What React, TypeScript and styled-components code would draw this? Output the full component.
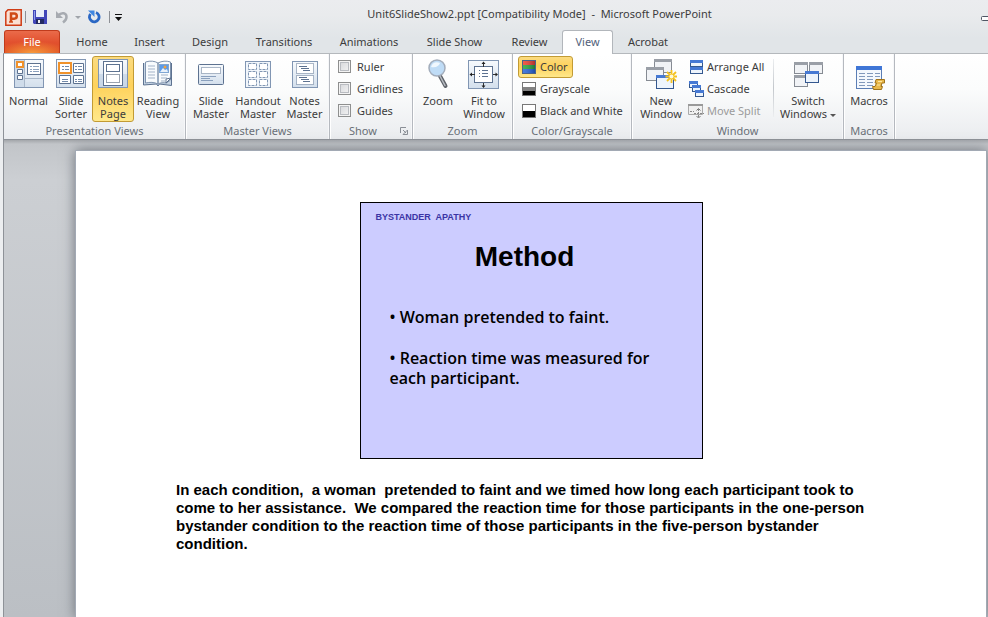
import React from "react";
import styled, { createGlobalStyle, css } from "styled-components";

const GlobalStyle = createGlobalStyle`
  *, *::before, *::after { box-sizing: border-box; }
  html, body { margin: 0; }
  body {
    background: #eceef0;
    font-family: "Noto Sans", "Open Sans", sans-serif;
    font-size: 11px;
    color: #3c3c3c;
  }
  button, input { font: inherit; color: inherit; }
`;

const Window = styled.div`
  display: flex;
  flex-direction: column;
  min-height: 100vh;
  overflow: hidden;
`;

const Header = styled.header`
  background: linear-gradient(#ebecef, #e9ebed 15px, #e1e5e8 38px);
`;

const TitleBar = styled.div`
  display: flex;
  align-items: center;
  height: 30px;
  padding-left: 5px;
`;

const QuickAccess = styled.div`
  display: flex;
  align-items: center;
  flex: none;
  width: 116px;
  padding-top: 4px;
`;

const ToolButton = styled.button<{ $width: number }>`
  display: flex;
  align-items: center;
  justify-content: center;
  flex: none;
  width: ${(p) => p.$width}px;
  height: 18px;
  padding: 0;
  border: 0;
  background: none;
`;

const ToolDivider = styled.span`
  flex: none;
  width: 1px;
  height: 12px;
  margin: 0 4px 0 3px;
  background: #8d9096;
`;

const Title = styled.h1`
  flex: 1;
  margin: 0 0 2px;
  font-size: 11px;
  line-height: 28px;
  font-weight: 400;
  text-align: center;
  white-space: pre;
`;

const WindowButtons = styled.div`
  display: flex;
  flex: none;
  justify-content: flex-end;
  width: 30px;
  padding-top: 6px;
`;

const TabBar = styled.nav`
  display: flex;
  height: 23px;
  padding-left: 4px;
`;

const tabBase = css`
  flex: none;
  height: 24px;
  padding: 0 0 2px;
  line-height: 20px;
  text-align: center;
  white-space: nowrap;
`;

const FileTab = styled.button`
  ${tabBase}
  width: 56px;
  margin-right: 3px;
  height: 23px;
  padding: 0;
  border: 1px solid #c03b1c;
  border-bottom: 0;
  border-radius: 3px 3px 0 0;
  color: #fff;
  background: radial-gradient(ellipse 36px 12px at 50% 100%, #f79a3c, rgba(247, 154, 60, 0)),
    linear-gradient(#ea6b4a, #e2512f 50%, #dd4a22);
`;

const Tab = styled.button<{ $width: number; $active?: boolean }>`
  ${tabBase}
  position: relative;
  width: ${(p) => p.$width}px;
  border: 1px solid ${(p) => (p.$active ? "#b2b6bb" : "transparent")};
  border-bottom: 0;
  border-radius: 3px 3px 0 0;
  background: ${(p) => (p.$active ? "#fff" : "transparent")};
  color: ${(p) => (p.$active ? "#52617a" : "#3c3c3c")};
`;

const Ribbon = styled.div`
  display: flex;
  height: 87px;
  margin-left: 3px;
  border: 1px solid #8e9298;
  border-top-color: #b4b8bc;
  border-right: 0;
  background: linear-gradient(#fff, #fbfcfc 35px, #eaecef);
`;

const Group = styled.section<{ $width: number }>`
  display: flex;
  flex-direction: column;
  flex: none;
  width: ${(p) => p.$width}px;
  border-right: 1px solid #b5b9bf;
  box-shadow: inset -1px 0 #f6f7f9, 1px 0 #fff;
`;

const GroupBody = styled.div<{ $pad?: number }>`
  display: flex;
  flex: none;
  height: 68px;
  padding: 2px 0 0 ${(p) => p.$pad ?? 3}px;
`;

const GroupFooter = styled.footer`
  display: flex;
  align-items: center;
  height: 17px;
  color: #6a7078;
`;

const GroupTitle = styled.h2`
  flex: 1;
  margin: 0;
  font-size: 11px;
  line-height: 16px;
  font-weight: 400;
  text-align: center;
`;

const Launcher = styled.button`
  display: flex;
  flex: none;
  width: 16px;
  height: 12px;
  padding: 2px 0 0 4px;
  border: 0;
  background: none;
`;

const chosen = css`
  border-color: #c29b34;
  background: linear-gradient(#fbdb80, #fed25c 45%, #ffe88a);
`;

const BigButton = styled.button<{ $width: number; $active?: boolean }>`
  display: flex;
  flex-direction: column;
  align-items: center;
  flex: none;
  width: ${(p) => p.$width}px;
  height: 66px;
  padding: 1px 0 0;
  border: 1px solid transparent;
  border-radius: 3px;
  background: none;
  line-height: 13px;
  text-align: center;
  white-space: nowrap;
  ${(p) => p.$active && chosen}

  svg { flex: none; margin-bottom: 4px; }
`;

const Column = styled.div<{ $width?: number }>`
  display: flex;
  flex-direction: column;
  align-items: flex-start;
  flex: none;
  width: ${(p) => (p.$width ? `${p.$width}px` : "auto")};
`;

const SmallButton = styled.button<{ $active?: boolean }>`
  display: flex;
  align-items: center;
  gap: 3px;
  height: 22px;
  padding: 0 4px 2px 2px;
  border: 1px solid transparent;
  border-radius: 3px;
  background: none;
  white-space: nowrap;
  ${(p) => p.$active && chosen}

  svg { flex: none; margin-top: 2px; }
  &:disabled { color: #9b9b9b; }
`;

const CheckLabel = styled.label`
  display: flex;
  align-items: center;
  gap: 6px;
  height: 22px;
  padding-bottom: 2px;
`;

const CheckBox = styled.input`
  appearance: none;
  width: 13px;
  height: 13px;
  margin: 0;
  border: 1px solid #8e8f8f;
  background: linear-gradient(135deg, #d3d5d8, #f6f6f6);
  box-shadow: inset 0 0 0 1px #f4f4f4, inset 0 0 0 2px #b9bcc1;
`;

const InnerDivider = styled.span`
  flex: none;
  width: 1px;
  height: 58px;
  margin: 3px 1px 0 0;
  background: linear-gradient(#eceef0, #c3c7cc 50%, #eceef0);
`;

const Caret = styled.span`
  display: inline-block;
  margin-left: 3px;
  vertical-align: middle;
  border: 3px solid transparent;
  border-top-color: #555;
  border-bottom: 0;
`;

const Workspace = styled.main`
  display: flex;
  flex: 1;
  margin-left: 3px;
  padding: 11px 2px 0 72px;
  border-left: 1px solid #8e9298;
  background: linear-gradient(#a4a7ab, #c2c5c9 4px, #cccfd3 40px, #bbbfc4);
`;

const Page = styled.article`
  display: flex;
  flex-direction: column;
  align-items: center;
  flex: 1;
  padding: 51px 100px 0;
  background: #fff;
  box-shadow: 0 0 0 1px #a2a9b4, 0 0 12px 1px #6f747b;
`;

const Slide = styled.section`
  width: 343px;
  height: 257px;
  padding: 7px 14px 0 15px;
  border: 1px solid #000;
  background: #ccf;
  color: #000;
`;

const SlideHeader = styled.p`
  margin: 0;
  color: #3b35a5;
  font: bold 9px/14px "Liberation Sans", Arial, sans-serif;
  white-space: pre;
`;

const SlideTitle = styled.h3`
  margin: 16px 14px 33px 0;
  font: bold 28px/34px "Liberation Sans", Arial, sans-serif;
  text-align: center;
`;

const Bullets = styled.ul`
  display: flex;
  flex-direction: column;
  gap: 21px;
  margin: 0;
  padding: 0 30px 0 14px;
  list-style: none;
  font: 600 16px/20px "Open Sans", sans-serif;

  li::before { content: "• "; }
`;

const Notes = styled.p`
  align-self: stretch;
  margin: 22px 0 0;
  color: #000;
  font: bold 15px/18px "Liberation Sans", Arial, sans-serif;
  white-space: pre-wrap;
`;

const line = "#5d7290";

function Frame({ children }: { children: React.ReactNode }) {
  return (
    <svg width="32" height="32" viewBox="0 0 32 32" fill="none">
      <defs>
        <linearGradient id="frame" x1="0" y1="0" x2="0" y2="1">
          <stop offset="0" stopColor="#f7fafd" />
          <stop offset="1" stopColor="#d3dfec" />
        </linearGradient>
      </defs>
      {children}
    </svg>
  );
}

const Panel = () => <rect x="1.5" y="1.5" width="29" height="28" fill="url(#frame)" stroke="#8196b3" />;

const NormalIcon = () => (
  <Frame>
    <Panel />
    <path d="M2 2h9v27H2z" fill="#cfdcea" />
    <path d="M11.500 2v27M12 20.500h18" stroke="#a9b8ca" />
    <path d="M4.500 11.500h5v4h-5zM4.500 17.500h5v4h-5z" fill="#fff" stroke={line} />
    <rect x="4" y="4" width="6" height="5" fill="#fff" stroke="#f0922b" strokeWidth="2" />
    <rect x="14.500" y="5.500" width="13" height="11" fill="#fff" stroke={line} />
    <path d="M17 8.500h2M20 8.500h6M17 11.500h2M20 11.500h6M17 13.500h2M20 13.500h6" stroke="#8aa0bd" />
  </Frame>
);

const SorterIcon = () => (
  <Frame>
    <Panel />
    <path d="M18.500 5.500h10v9h-10zM4.500 17.500h11v8h-11zM18.500 17.500h10v8h-10z" fill="#fff" stroke={line} />
    <rect x="4" y="5" width="12" height="10" fill="#fff" stroke="#f0922b" strokeWidth="2" />
    <path d="M7 8.500h2M10 8.500h4M7 11.500h2M10 11.500h4M20 8.500h2M23 8.500h4M20 11.500h2M23 11.500h4M7 21.500h6M7 23.500h6M20 21.500h2M23 21.500h4M20 23.500h2M23 23.500h4" stroke="#7189a9" />
  </Frame>
);

const NotesIcon = () => (
  <Frame>
    <Panel />
    <path d="M2 16h28v13H2z" fill="#b9cbe0" opacity=".5" />
    <rect x="6.500" y="3.500" width="19" height="24" fill="#fff" stroke={line} />
    <rect x="9.500" y="6.500" width="13" height="7" fill="#fff" stroke={line} />
    <rect x="9.500" y="16.500" width="13" height="8" stroke="#34465f" strokeDasharray="1 1" />
  </Frame>
);

const ReadingIcon = () => (
  <Frame>
    <path d="M1.500 5v22l13-1 1.500 2 1.500-2 12 1.500V5" fill="#c6d5e5" stroke={line} />
    <path d="M3.500 4c5-1.500 9-1 12.500 1v21c-4-2-8-2-12.500-1zM16 5c4-2 8-2.500 12.500-1v18l-4 3c-3-.5-6-.5-8.500 1z" fill="#f8fbfd" stroke="#7f93ad" />
    <path d="M6 8h7M6 11h7M6 14h7M6 17h7M6 20h7M19 17h7M19 20h6M19 23h4" stroke="#a3b3c8" />
    <rect x="17.500" y="6.500" width="9" height="8" fill="#5a9bea" stroke="#7fa6d3" />
    <path d="M18 14l3-4 2 2 2-1 1 3z" fill="#e8f1fa" />
    <circle cx="23" cy="9" r="1.500" fill="#f3a13c" />
    <path d="M24 25v-4l5-1z" fill="#fff" stroke={line} />
  </Frame>
);

const SlideMasterIcon = () => (
  <Frame>
    <rect x="3.500" y="6.500" width="25" height="20" rx="1" fill="url(#frame)" stroke={line} />
    <rect x="6.500" y="9.500" width="19" height="6" fill="#fff" stroke={line} strokeDasharray="1 1" />
    <path d="M6 18.500h15M6 20.500h9M6 22.500h12" stroke="#8aa0bd" />
  </Frame>
);

const HandoutIcon = () => (
  <Frame>
    <rect x="3.500" y="3.500" width="25" height="26" fill="#f1f6fb" stroke="#8196b3" />
    <path d="M6.500 5.500h8v6h-8zM17.500 5.500h8v6h-8zM6.500 13.500h8v6h-8zM17.500 13.500h8v6h-8zM6.500 21.500h8v6h-8zM17.500 21.500h8v6h-8z" fill="#fff" stroke="#8196b3" strokeDasharray="3 1" />
  </Frame>
);

const NotesMasterIcon = () => (
  <Frame>
    <rect x="3.500" y="3.500" width="25" height="26" fill="url(#frame)" stroke="#8196b3" />
    <path d="M7.500 5.500h17v10h-17zM7.500 17.500h17v9h-17z" fill="#fff" stroke={line} strokeDasharray="1 1" />
    <path d="M10 8.500h8M12 10.500h8M14 12.500h7M10 19.500h8M12 21.500h8M14 23.500h7" stroke={line} />
  </Frame>
);

const ZoomIcon = () => (
  <Frame>
    <path d="M18 18l5.500 10" stroke="#5e6269" strokeWidth="4" strokeLinecap="round" />
    <path d="M18 18l5 9.500" stroke="#b9bdc3" strokeWidth="1.500" strokeLinecap="round" />
    <circle cx="15" cy="10" r="8" fill="#bfdcf6" stroke="#a3adbb" strokeWidth="1.500" />
    <path d="M9 9c1-4 5-6 9-4-1 3-4 5-9 4z" fill="#f0f8fe" />
  </Frame>
);

const FitIcon = () => (
  <Frame>
    <rect x=".5" y="2.500" width="30" height="28" fill="url(#frame)" stroke="#8196b3" />
    <rect x="6.500" y="8.500" width="18" height="16" fill="#fff" stroke={line} />
    <path d="M11 12.500h1M14 12.500h6M11 15.500h1M14 15.500h6M11 18.500h1M14 18.500h6" stroke={line} />
    <path d="M15.500 5v4M15.500 25v4M3 16.500h4M25 16.500h4" stroke="#333" />
    <path d="M13.500 6l2-2.500 2 2.500zM13.500 27.500l2 2.500 2-2.500zM4 14.500l-2.500 2 2.500 2zM27.500 14.500l2.500 2-2.500 2z" fill="#222" />
  </Frame>
);

function MiniWindow({ x, y, w, h, blue }: { x: number; y: number; w: number; h: number; blue?: boolean }) {
  return (
    <g>
      <rect x={x + 0.5} y={y + 0.5} width={w} height={h} fill={blue ? "#edf4fc" : "#f1f3f6"} stroke={blue ? "#34588f" : "#868b93"} />
      <rect x={x} y={y} width={w + 1} height="3" fill={blue ? "#4679d4" : "#9a9fa7"} />
    </g>
  );
}

const NewWindowIcon = () => (
  <Frame>
    <MiniWindow x={9} y={1} w={17} h={13} />
    <MiniWindow x={1} y={9} w={17} h={13} />
    <MiniWindow x={11} y={17} w={17} h={13} blue />
    <path d="M26.500 12v13M20.500 18.500h12M22 14l9 9M31 14l-9 9" stroke="#f5c21f" strokeWidth="1.800" />
    <circle cx="26.500" cy="18.500" r="2" fill="#fffbd6" />
  </Frame>
);

const SwitchIcon = () => (
  <Frame>
    <MiniWindow x={2} y={4} w={13} h={11} />
    <MiniWindow x={17} y={4} w={13} h={11} />
    <MiniWindow x={2} y={17} w={13} h={11} />
    <MiniWindow x={13} y={13} w={13} h={11} blue />
  </Frame>
);

const MacrosIcon = () => (
  <Frame>
    <rect x="3.500" y="8.500" width="25" height="22" fill="#f4f8fd" stroke="#5b7eb5" />
    <path d="M3 8h26v4H3z" fill="#3f76d6" />
    <path d="M6 15.500h6M6 18.500h6M6 21.500h6M6 24.500h6M6 27.500h6M14 15.500h6M14 18.500h6M14 21.500h6M14 24.500h6M14 27.500h6M22 15.500h5M22 18.500h5" stroke="#8299bb" />
    <path d="M23 21.500h8.500v3.500h-2.500l-1 3.500h1.500l-1 3h-8l-1-3h2.500l1.500-3.500h-1.500z" fill="#e8b84a" stroke="#a0731a" />
    <path d="M25 23.500h4M24 27h3" stroke="#fbe6a4" />
  </Frame>
);

function SmallIcon({ children }: { children: React.ReactNode }) {
  return (
    <svg width="16" height="16" viewBox="0 0 16 16" fill="none">
      {children}
    </svg>
  );
}

const ColorIcon = () => (
  <SmallIcon>
    <defs>
      <linearGradient id="shade" x1="0" y1="0" x2="1" y2="0">
        <stop offset="0" stopColor="#fff" stopOpacity=".15" />
        <stop offset="1" stopColor="#002" stopOpacity=".3" />
      </linearGradient>
    </defs>
    <path d="M2 2h13v4H2z" fill="#f0402c" />
    <path d="M2 6h13v4H2z" fill="#28a83a" />
    <path d="M2 10h13v5H2z" fill="#2766d9" />
    <rect x="1.500" y="1.500" width="13" height="13" fill="url(#shade)" stroke="#4c6488" />
  </SmallIcon>
);

const GrayIcon = () => (
  <SmallIcon>
    <path d="M2 2h13v4H2z" fill="#fff" />
    <path d="M2 6h13v4H2z" fill="#828282" />
    <path d="M2 10h13v5H2z" fill="#000" />
    <rect x="1.500" y="1.500" width="13" height="13" stroke="#777" />
  </SmallIcon>
);

const BlackWhiteIcon = () => (
  <SmallIcon>
    <path d="M2 2h13v6H2z" fill="#fff" />
    <path d="M2 8h13v7H2z" fill="#000" />
    <rect x="1.500" y="1.500" width="13" height="13" stroke="#777" />
  </SmallIcon>
);

const ArrangeIcon = () => (
  <SmallIcon>
    <MiniWindow x={2} y={1} w={12} h={6} blue />
    <MiniWindow x={2} y={8} w={12} h={6} blue />
  </SmallIcon>
);

const CascadeIcon = () => (
  <SmallIcon>
    <MiniWindow x={1} y={0} w={8} h={6} blue />
    <MiniWindow x={4} y={4} w={8} h={6} blue />
    <MiniWindow x={7} y={9} w={8} h={6} blue />
  </SmallIcon>
);

const SplitIcon = () => (
  <SmallIcon>
    <path d="M.5 1.500h14v10H.5z" fill="#f0f0f0" stroke="#aaa" />
    <path d="M0 1h15v2H0z" fill="#999" />
    <path d="M2 8.500h4M10.500 6v9M6 10.500h10" stroke="#888" strokeDasharray="2 1" />
    <path d="M8.500 7.500l2-2 2 2M8.500 13l2 2 2-2" stroke="#777" />
  </SmallIcon>
);

const PowerPointIcon = () => (
  <svg width="17" height="17" viewBox="0 0 17 17" fill="none">
    <path d="M3 .8h13.200v15.400H.8V3z" fill="#fbe0d3" stroke="#cf3c16" strokeWidth="1.500" />
    <path d="M6 13V4.500h3.200a2.600 2.600 0 010 5.200H6" stroke="#d04a16" strokeWidth="2.500" />
    <path d="M4 13h4" stroke="#d04a16" strokeWidth="1.500" />
  </svg>
);

const SaveIcon = () => (
  <svg width="14" height="14" viewBox="0 0 14 14">
    <path d="M0 0h14v14H1l-1-1z" fill="#4146b8" />
    <path d="M3 0h8v7H3z" fill="#e9eef9" />
    <path d="M3 9h8v5H3z" fill="#222a63" />
    <path d="M5 10h2v3H5z" fill="#eee" />
    <path d="M1 1h1v9H1z" fill="#8f9cec" />
  </svg>
);

const UndoIcon = () => (
  <svg width="14" height="14" viewBox="0 0 14 14" fill="none">
    <path d="M3 5.500c4-4 8.500-2.500 8.500 1.500 0 2.500-1.500 4-3.500 5.500" stroke="#a7abb1" strokeWidth="2.500" />
    <path d="M1 1v7h7z" fill="#a7abb1" />
  </svg>
);

const RedoIcon = () => (
  <svg width="14" height="14" viewBox="0 0 14 14" fill="none">
    <path d="M9 2.500A4.800 4.800 0 113.500 4" stroke="#2a67c4" strokeWidth="2.800" />
    <path d="M1 .5h6.500V7z" fill="#3f86e0" />
  </svg>
);

const LaunchIcon = () => (
  <svg width="8" height="8" viewBox="0 0 8 8" fill="none">
    <path d="M.5 6V.5H6" stroke="#8a8f96" />
    <path d="M3 3l3 3M7.500 3v4.500H3z" stroke="#8a8f96" />
  </svg>
);

const tabs = [
  { name: "Home", width: 58 },
  { name: "Insert", width: 57 },
  { name: "Design", width: 64 },
  { name: "Transitions", width: 84 },
  { name: "Animations", width: 86 },
  { name: "Slide Show", width: 85 },
  { name: "Review", width: 65 },
  { name: "View", width: 51 },
  { name: "Acrobat", width: 70 },
];

interface BigProps {
  icon: React.ReactNode;
  top: string;
  bottom?: string;
  width: number;
  active?: boolean;
  menu?: boolean;
}

function Big({ icon, top, bottom, width, active, menu }: BigProps) {
  return (
    <BigButton type="button" $width={width} $active={active} aria-pressed={active}>
      {icon}
      <span>{top}</span>
      {bottom && (
        <span>
          {bottom}
          {menu && <Caret />}
        </span>
      )}
    </BigButton>
  );
}

interface RibbonGroupProps {
  title: string;
  width: number;
  pad?: number;
  launcher?: boolean;
  children: React.ReactNode;
}

function RibbonGroup({ title, width, pad, launcher, children }: RibbonGroupProps) {
  return (
    <Group $width={width}>
      <GroupBody $pad={pad}>{children}</GroupBody>
      <GroupFooter>
        <GroupTitle>{title}</GroupTitle>
        {launcher && (
          <Launcher type="button" aria-label={`${title} options`}>
            <LaunchIcon />
          </Launcher>
        )}
      </GroupFooter>
    </Group>
  );
}

const notes =
  "In each condition,  a woman  pretended to faint and we timed how long each participant took to come to her assistance.  We compared the reaction time for those participants in the one-person bystander condition to the reaction time of those participants in the five-person bystander condition.";

export default function App() {
  return (
    <Window>
      <GlobalStyle />
      <Header>
        <TitleBar>
          <QuickAccess>
            <ToolButton $width={17} type="button" aria-label="PowerPoint"><PowerPointIcon /></ToolButton>
            <ToolDivider />
            <ToolButton $width={20} type="button" aria-label="Save"><SaveIcon /></ToolButton>
            <ToolButton $width={24} type="button" aria-label="Undo"><UndoIcon /></ToolButton>
            <ToolButton $width={8} type="button" aria-label="Undo history">
              <svg width="6" height="3"><path d="M0 0h6L3 3z" fill="#a0a4aa" /></svg>
            </ToolButton>
            <ToolButton $width={24} type="button" aria-label="Redo"><RedoIcon /></ToolButton>
            <ToolDivider />
            <ToolButton $width={8} type="button" aria-label="Customize toolbar">
              <svg width="7" height="7"><path d="M0 0h7v1H0zM0 3h7L3.500 7z" fill="#111" /></svg>
            </ToolButton>
          </QuickAccess>
          <Title>Unit6SlideShow2.ppt [Compatibility Mode]  -  Microsoft PowerPoint</Title>
          <WindowButtons>
            <ToolButton $width={7} type="button" aria-label="Minimize">
              <svg width="7" height="5" viewBox="0 0 7 5"><rect x=".5" y=".5" width="9" height="4" rx="1" fill="#fff" stroke="#4f5664" /></svg>
            </ToolButton>
          </WindowButtons>
        </TitleBar>
        <TabBar>
          <FileTab type="button">File</FileTab>
          {tabs.map((t) => (
            <Tab key={t.name} type="button" $width={t.width} $active={t.name === "View"}>{t.name}</Tab>
          ))}
        </TabBar>
      </Header>
      <Ribbon>
        <RibbonGroup title="Presentation Views" width={182}>
          <Big icon={<NormalIcon />} top="Normal" width={43} />
          <Big icon={<SorterIcon />} top="Slide" bottom="Sorter" width={42} />
          <Big icon={<NotesIcon />} top="Notes" bottom="Page" width={42} active />
          <Big icon={<ReadingIcon />} top="Reading" bottom="View" width={48} />
        </RibbonGroup>
        <RibbonGroup title="Master Views" width={144}>
          <Big icon={<SlideMasterIcon />} top="Slide" bottom="Master" width={44} />
          <Big icon={<HandoutIcon />} top="Handout" bottom="Master" width={50} />
          <Big icon={<NotesMasterIcon />} top="Notes" bottom="Master" width={43} />
        </RibbonGroup>
        <RibbonGroup title="Show" width={83} pad={8} launcher>
          <Column>
            <CheckLabel><CheckBox type="checkbox" />Ruler</CheckLabel>
            <CheckLabel><CheckBox type="checkbox" />Gridlines</CheckLabel>
            <CheckLabel><CheckBox type="checkbox" />Guides</CheckLabel>
          </Column>
        </RibbonGroup>
        <RibbonGroup title="Zoom" width={100}>
          <Big icon={<ZoomIcon />} top="Zoom" width={44} />
          <Big icon={<FitIcon />} top="Fit to" bottom="Window" width={48} />
        </RibbonGroup>
        <RibbonGroup title="Color/Grayscale" width={119} pad={5}>
          <Column>
            <SmallButton type="button" $active aria-pressed><ColorIcon />Color</SmallButton>
            <SmallButton type="button"><GrayIcon />Grayscale</SmallButton>
            <SmallButton type="button"><BlackWhiteIcon />Black and White</SmallButton>
          </Column>
        </RibbonGroup>
        <RibbonGroup title="Window" width={212} pad={5}>
          <Big icon={<NewWindowIcon />} top="New" bottom="Window" width={48} />
          <Column $width={88}>
            <SmallButton type="button"><ArrangeIcon />Arrange All</SmallButton>
            <SmallButton type="button"><CascadeIcon />Cascade</SmallButton>
            <SmallButton type="button" disabled><SplitIcon />Move Split</SmallButton>
          </Column>
          <InnerDivider />
          <Big icon={<SwitchIcon />} top="Switch" bottom="Windows" width={66} menu />
        </RibbonGroup>
        <RibbonGroup title="Macros" width={51}>
          <Big icon={<MacrosIcon />} top="Macros" width={44} />
        </RibbonGroup>
      </Ribbon>
      <Workspace>
        <Page>
          <Slide>
            <SlideHeader>BYSTANDER  APATHY</SlideHeader>
            <SlideTitle>Method</SlideTitle>
            <Bullets>
              <li>Woman pretended to faint.</li>
              <li>Reaction time was measured for each participant.</li>
            </Bullets>
          </Slide>
          <Notes>{notes}</Notes>
        </Page>
      </Workspace>
    </Window>
  );
}
